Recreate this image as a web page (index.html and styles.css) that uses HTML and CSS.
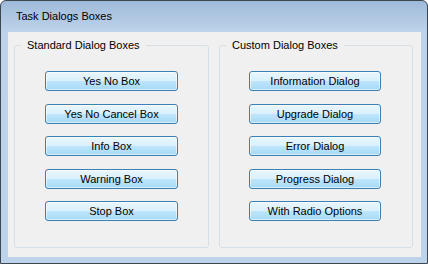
FILE: index.html
```html
<!DOCTYPE html>
<html lang="en">

<head>
    <meta charset="UTF-8">
    <meta name="viewport" content="width=device-width, initial-scale=1.0">
    <title>Task Dialogs Boxes</title>
    <link rel="stylesheet" href="styles.css">
</head>

<body>
    <div class="window">
        <div class="title-bar">Task Dialogs Boxes</div>
        <div class="client">
            <fieldset class="group group-standard">
                <legend>Standard Dialog Boxes</legend>
                <div class="btn-list">
                    <button class="btn">Yes No Box</button>
                    <button class="btn">Yes No Cancel Box</button>
                    <button class="btn">Info Box</button>
                    <button class="btn">Warning Box</button>
                    <button class="btn">Stop Box</button>
                </div>
            </fieldset>
            <fieldset class="group group-custom">
                <legend>Custom Dialog Boxes</legend>
                <div class="btn-list">
                    <button class="btn">Information Dialog</button>
                    <button class="btn">Upgrade Dialog</button>
                    <button class="btn">Error Dialog</button>
                    <button class="btn">Progress Dialog</button>
                    <button class="btn">With Radio Options</button>
                </div>
            </fieldset>
        </div>
    </div>
</body>

</html>
```

FILE: styles.css
```css
body {
    margin: 0;
    font-family: "Liberation Sans", Arial, sans-serif;
    font-size: 11px;
    color: #000;
}

.window {
    width: 428px;
    height: 264px;
    box-sizing: border-box;
    display: flex;
    flex-direction: column;
    border: 1px solid #3e4650;
    border-radius: 6px 6px 0 0;
    padding: 0 6px 6px 7px;
    background: linear-gradient(#9fbad9, #bed3eb 31px, #bdd3ec);
}

.title-bar {
    height: 31px;
    box-sizing: border-box;
    padding: 9px 0 0 8px;
    line-height: 13px;
}

.client {
    flex: 1;
    display: flex;
    gap: 10px;
    padding: 7px 8px 9px 6px;
    background-color: #f0f0f0;
}

.group {
    margin: 0;
    padding: 0 6px;
    min-width: 0;
    box-sizing: border-box;
    border: 1px solid #d5dfe5;
    border-radius: 3px;
}

.group-standard {
    width: 195px;
}

.group-custom {
    width: 194px;
}

.group legend {
    padding: 0 6px;
    line-height: 13px;
}

.btn-list {
    display: flex;
    flex-direction: column;
    align-items: flex-start;
    gap: 12px;
    padding: 19px 0 0 24px;
}

.group-custom .btn-list {
    padding-left: 23px;
}

.btn {
    width: 133px;
    height: 20px;
    box-sizing: border-box;
    padding: 0;
    border: 1px solid #3c7fb1;
    border-radius: 3px;
    background: linear-gradient(#eaf6fd, #d9f0fc 50%, #bee6fd 50%, #a7d9f5);
    box-shadow: inset 0 0 0 1px rgba(255, 255, 255, 0.55);
    font-family: inherit;
    font-size: 11px;
    line-height: 18px;
    color: #000;
}

.group-custom .btn {
    width: 132px;
}

.btn:nth-child(even) {
    margin-top: 1px;
}
```
